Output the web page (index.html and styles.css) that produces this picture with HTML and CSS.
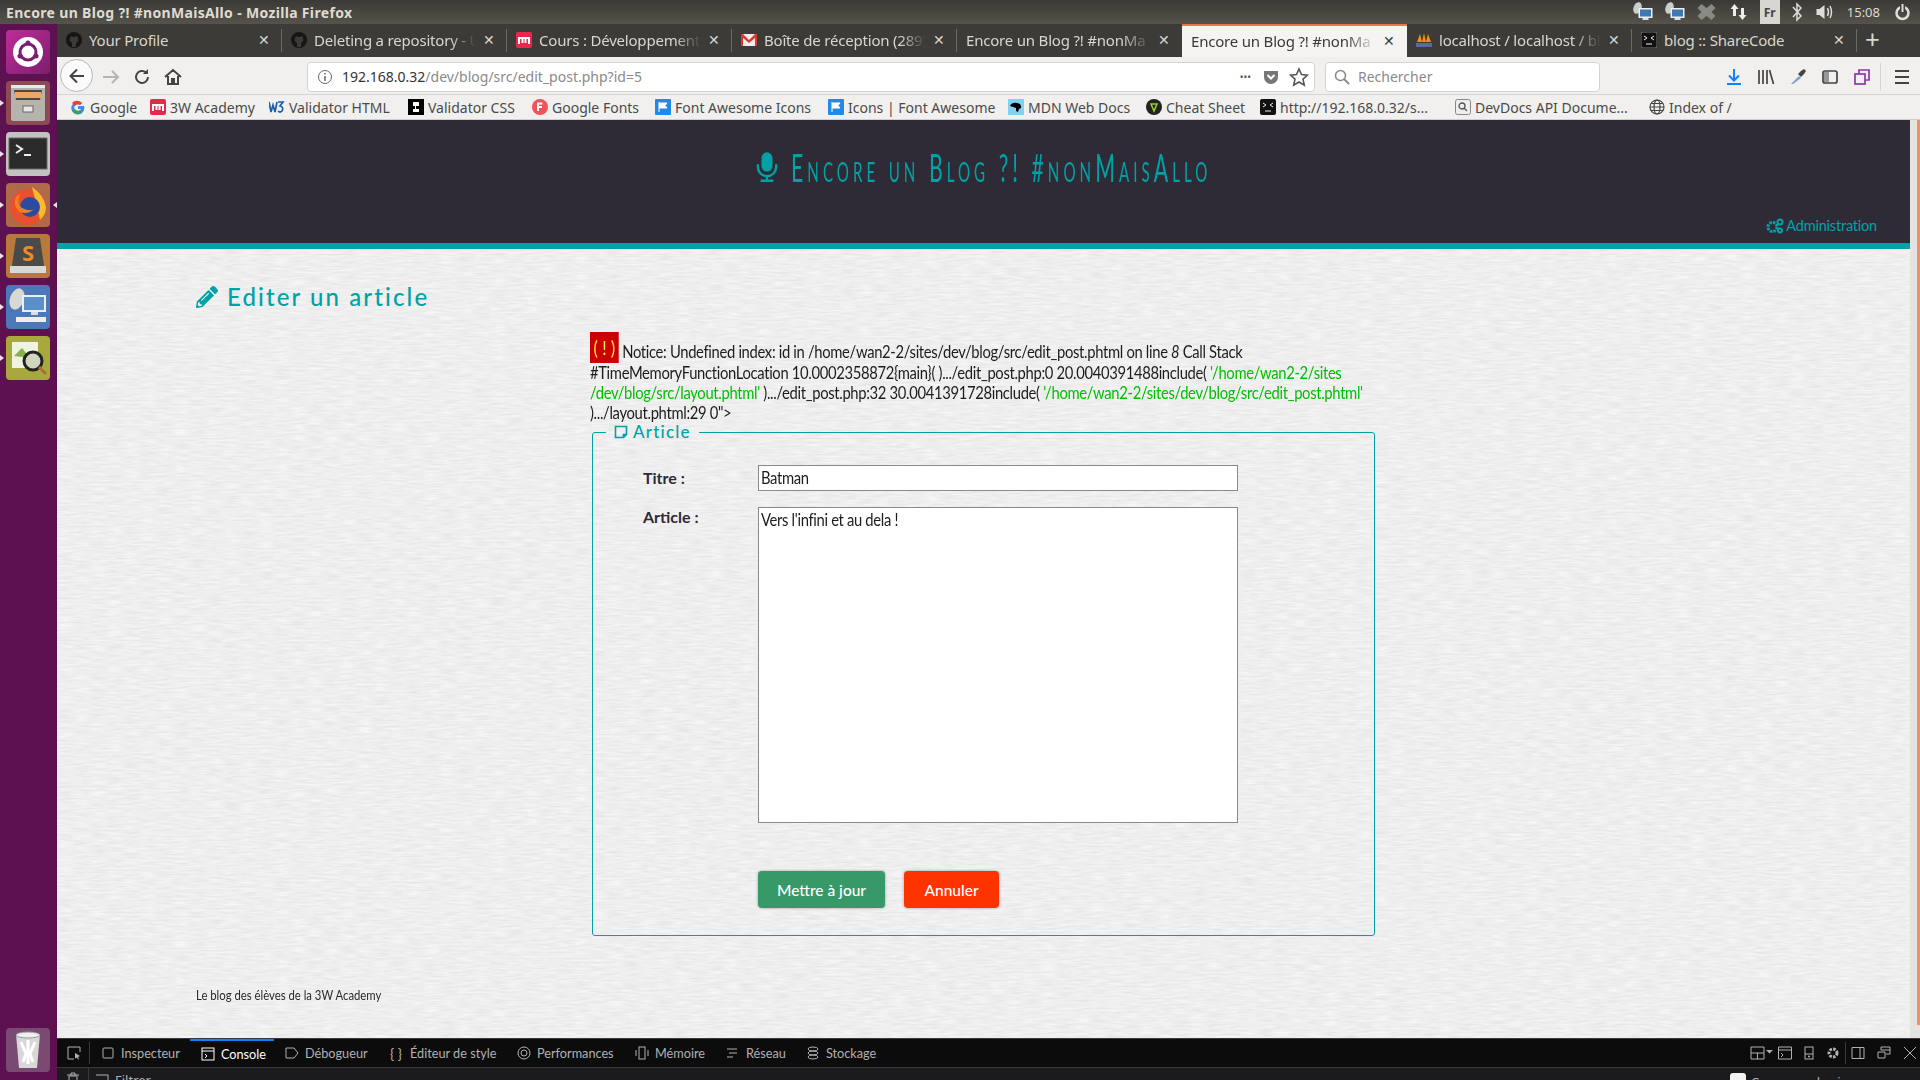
FILE: index.html
```html
<!DOCTYPE html>
<html lang="fr">
<head>
<meta charset="utf-8">
<title>Encore un Blog ?! #nonMaisAllo - Mozilla Firefox</title>
<link rel="stylesheet" href="styles.css">
</head>
<body>
<header class="topbar">
  <span class="wintitle">Encore un Blog ?! #nonMaisAllo - Mozilla Firefox</span>
  <div class="tray">
    <svg class="t-ic" viewBox="0 0 22 20"><ellipse cx="6" cy="6" rx="4" ry="6" fill="#ccc" transform="rotate(20 6 6)"/><rect x="7" y="6" width="14" height="10" fill="#eee"/><rect x="8.500" y="7.500" width="11" height="7" fill="#3d78b4"/><rect x="11" y="16" width="6" height="2" fill="#ddd"/></svg>
    <svg class="t-ic" viewBox="0 0 22 20"><ellipse cx="6" cy="6" rx="4" ry="6" fill="#ccc" transform="rotate(20 6 6)"/><rect x="7" y="6" width="14" height="10" fill="#eee"/><rect x="8.500" y="7.500" width="11" height="7" fill="#3d78b4"/><rect x="11" y="16" width="6" height="2" fill="#ddd"/></svg>
    <svg class="t-ic" viewBox="0 0 20 20"><path d="M5 2l5 4 5-4 4 4-4 4 4 4-4 4-5-4-5 4-4-4 4-4-4-4z" fill="#8a8a84"/></svg>
    <svg class="t-ic" viewBox="0 0 20 20"><path d="M6 2l4 5H7.500v7h-3V7H2zM14 18l-4-5h2.500V6h3v7H18z" fill="#eee"/></svg>
    <span class="kbd">Fr</span>
    <svg class="t-ic t-bt" viewBox="0 0 12 20"><path d="M2 5l8 9-4 4V2l4 4-8 9" fill="none" stroke="#ddd" stroke-width="1.500"/></svg>
    <svg class="t-ic" viewBox="0 0 20 20"><path d="M2 7h3l5-4v14l-5-4H2z" fill="#ddd"/><path d="M13 6q2 4 0 8M15.500 4q3 6 0 12" fill="none" stroke="#ddd" stroke-width="1.500"/></svg>
    <span class="clock">15:08</span>
    <svg class="t-ic" viewBox="0 0 20 20"><circle cx="10" cy="11" r="6" fill="none" stroke="#ddd" stroke-width="2.500"/><path d="M10 1v9" stroke="#3f3e3a" stroke-width="5"/><path d="M10 2v8" stroke="#ddd" stroke-width="2"/></svg>
  </div>
</header>

<div class="desk">
  <nav class="launcher">
    <div class="app app-dash"><svg viewBox="0 0 44 44"><circle cx="22" cy="22" r="15" fill="#fff"/><circle cx="22" cy="22" r="8" fill="none" stroke="#7b1f6d" stroke-width="3"/><circle cx="22" cy="13" r="2.500" fill="#7b1f6d"/><circle cx="14" cy="26" r="2.500" fill="#7b1f6d"/><circle cx="30" cy="26" r="2.500" fill="#7b1f6d"/></svg></div>
    <div class="app app-files pip"><svg viewBox="0 0 44 44"><rect x="5" y="4" width="34" height="36" rx="2" fill="#b5b3ae"/><rect x="5" y="4" width="34" height="3" fill="#e8e8e6"/><path d="M8 9h28l-2 10H10z" fill="#4a4744"/><rect x="9" y="11" width="26" height="6" fill="#eda56a"/><rect x="17" y="25" width="10" height="6" fill="#e8e8e6" stroke="#666"/></svg></div>
    <div class="app app-term pip"><svg viewBox="0 0 44 44"><rect x="3" y="6" width="38" height="31" fill="#2b2b2b" stroke="#666"/><path d="M10 13l6 4-6 4" fill="none" stroke="#eee" stroke-width="2"/><rect x="18" y="22" width="7" height="2" fill="#eee"/></svg></div>
    <div class="app app-fox pip pip-r"><svg viewBox="0 0 44 44"><circle cx="22" cy="24" r="18" fill="#e8502e"/><path d="M26 4q12 8 14 20 0 8-6 13-4-18-8-33z" fill="#fdb92e"/><circle cx="24" cy="24" r="10" fill="#2a4ba0"/><path d="M14 11q-4 10 2 14 8 4 12 1-6 6-14 3-8-6-4-15z" fill="#f4801f"/></svg></div>
    <div class="app app-subl pip"><svg viewBox="0 0 44 44"><path d="M10 4h24l4 28H6z" fill="#4a4a48"/><rect x="4" y="32" width="36" height="7" fill="#d8d8d4"/><text class="s-glyph" x="22" y="27">S</text></svg></div>
    <div class="app app-net pip"><svg viewBox="0 0 44 44"><ellipse cx="11" cy="14" rx="7" ry="11" fill="#d8d8d4" transform="rotate(20 11 14)"/><rect x="16" y="10" width="24" height="17" fill="#eee"/><rect x="18" y="12" width="20" height="13" fill="#5b8fc8"/><rect x="25" y="27" width="7" height="3" fill="#ddd"/><rect x="10" y="32" width="30" height="5" fill="#eee"/></svg></div>
    <div class="app app-search pip"><svg viewBox="0 0 44 44"><rect x="6" y="6" width="26" height="26" fill="#eef3e2"/><path d="M8 20l8-8 8 10z" fill="#8ab04a"/><circle cx="27" cy="25" r="9" fill="#cfd6c0" stroke="#222" stroke-width="3"/><path d="M33 31l7 7" stroke="#a8722c" stroke-width="3"/></svg></div>
    <div class="app app-trash"><svg viewBox="0 0 44 44"><path d="M10 6h24l-3 34H13z" fill="#d8d8d8"/><ellipse cx="22" cy="7" rx="12" ry="3" fill="#f0f0f0" stroke="#999"/><path d="M15 14l5 12-3 8M22 12v24M29 14l-5 12 3 8" stroke="#fff" stroke-width="3" fill="none"/></svg></div>
  </nav>

  <div class="browser">
    <div class="tabs">
      <div class="tab"><svg class="fav" viewBox="0 0 16 16"><circle cx="8" cy="8" r="8" fill="#161514"/><path d="M4 6l1-2 2 1h2l2-1 1 2q1 3-1 4l-1 1v4H6v-4L5 10q-2-1-1-4z" fill="#3b3a36"/></svg><span class="tab-t tab-full">Your Profile</span><span class="x">✕</span></div>
      <div class="tab"><svg class="fav" viewBox="0 0 16 16"><circle cx="8" cy="8" r="8" fill="#161514"/><path d="M4 6l1-2 2 1h2l2-1 1 2q1 3-1 4l-1 1v4H6v-4L5 10q-2-1-1-4z" fill="#3b3a36"/></svg><span class="tab-t">Deleting a repository - U</span><span class="x">✕</span></div>
      <div class="tab"><svg class="fav" viewBox="0 0 16 16"><rect width="16" height="16" rx="2" fill="#e8274b"/><path d="M3 12V6h10v6M6.500 7v4M9.500 7v4" fill="none" stroke="#fff" stroke-width="2"/></svg><span class="tab-t">Cours : Développement</span><span class="x">✕</span></div>
      <div class="tab"><svg class="fav" viewBox="0 0 16 16"><rect y="2" width="16" height="12" fill="#eee"/><path d="M0 2h2l6 6 6-6h2v12h-2V6L8 11 2 6v8H0z" fill="#d93a30"/></svg><span class="tab-t">Boîte de réception (289)</span><span class="x">✕</span></div>
      <div class="tab tab-plain"><span class="tab-t">Encore un Blog ?! #nonMa</span><span class="x">✕</span></div>
      <div class="tab tab-on"><span class="tab-t">Encore un Blog ?! #nonMa</span><span class="x">✕</span></div>
      <div class="tab"><svg class="fav" viewBox="0 0 16 16"><path d="M1 10L4 2l2 8M6 10L8 1l2 9M10 10l2-8 3 8z" fill="#f29111"/><rect y="11" width="16" height="4" fill="#5a6a9a"/></svg><span class="tab-t">localhost / localhost / bl</span><span class="x">✕</span></div>
      <div class="tab"><svg class="fav" viewBox="0 0 16 16"><rect width="16" height="16" rx="2" fill="#111" stroke="#777"/><path d="M3 4l3 2-3 2M13 4l-3 2 3 2M5 12h6" fill="none" stroke="#eee"/></svg><span class="tab-t tab-full">blog :: ShareCode</span><span class="x">✕</span></div>
      <span class="newtab">+</span>
    </div>

    <div class="navbar">
      <span class="back"><svg viewBox="0 0 20 20"><path d="M17 10H4M10 3.500L3.500 10l6.500 6.500" fill="none" stroke="#444" stroke-width="2"/></svg></span>
      <svg class="nb-ic" viewBox="0 0 20 20"><path d="M2 10h15M11 4l6 6-6 6" fill="none" stroke="#b5b5b5" stroke-width="2"/></svg>
      <svg class="nb-ic" viewBox="0 0 20 20"><path d="M16 10a6 6 0 1 1-2-4.500" fill="none" stroke="#444" stroke-width="2"/><path d="M16 2v5h-5z" fill="#444"/></svg>
      <svg class="nb-ic" viewBox="0 0 20 20"><path d="M2 10l8-7 8 7M5 9v8h4v-5h2v5h4V9" fill="none" stroke="#444" stroke-width="2"/></svg>
      <div class="url">
        <svg class="url-i" viewBox="0 0 16 16"><circle cx="8" cy="8" r="6.500" fill="none" stroke="#666"/><path d="M8 7v5M8 4v1.500" stroke="#666" stroke-width="1.500"/></svg>
        <span class="url-t"><b>192.168.0.32</b>/dev/blog/src/edit_post.php?id=5</span>
        <span class="dots">•••</span>
        <svg class="pocket" viewBox="0 0 16 16"><path d="M1 2h14v6a7 7 0 0 1-14 0z" fill="#777"/><path d="M4.500 6L8 9.500 11.500 6" fill="none" stroke="#fff" stroke-width="2"/></svg>
        <svg class="star" viewBox="0 0 20 20"><path d="M10 2l2.500 5.500 6 .6-4.500 4 1.300 6L10 15l-5.300 3.100 1.300-6-4.500-4 6-.6z" fill="none" stroke="#555" stroke-width="1.600"/></svg>
      </div>
      <div class="search">
        <svg class="url-i" viewBox="0 0 16 16"><circle cx="6.500" cy="6.500" r="5" fill="none" stroke="#888" stroke-width="1.500"/><path d="M10 10l5 5" stroke="#888" stroke-width="1.800"/></svg>
        <span>Rechercher</span>
      </div>
      <div class="nb-right">
        <svg class="nb-ic" viewBox="0 0 20 20"><path d="M10 2v11M5 8.500l5 5 5-5" fill="none" stroke="#0a84ff" stroke-width="2"/><rect x="3" y="16" width="14" height="2" fill="#0a84ff"/></svg>
        <svg class="nb-ic" viewBox="0 0 20 20"><path d="M3 3v14M7 3v14M11 3v14M13.500 3l4 14" fill="none" stroke="#444" stroke-width="1.700"/></svg>
        <svg class="nb-ic" viewBox="0 0 20 20"><path d="M3 17l8-8 2 2-8 6z" fill="#7a9fc8"/><path d="M10 7l3 3 3-3 2-3-2-2-3 2z" fill="#444"/></svg>
        <svg class="nb-ic" viewBox="0 0 20 20"><rect x="3" y="4" width="14" height="12" rx="2" fill="none" stroke="#444" stroke-width="1.700"/><rect x="4" y="5" width="5" height="10" fill="#999"/></svg>
        <svg class="nb-ic" viewBox="0 0 20 20"><rect x="3" y="7" width="10" height="10" fill="none" stroke="#8a3aa8" stroke-width="1.700"/><path d="M7 7V3h10v10h-4" fill="none" stroke="#8a3aa8" stroke-width="1.700"/></svg>
        <span class="nb-sep"></span>
        <svg class="nb-ic" viewBox="0 0 20 20"><path d="M3 4h14M3 10h14M3 16h14" stroke="#444" stroke-width="2"/></svg>
      </div>
    </div>

    <div class="bookmarks">
      <div class="bm"><svg class="fav" viewBox="0 0 16 16"><path d="M14 7H8v3h3a3.500 3.500 0 1 1-1-4l2-2a6.500 6.500 0 1 0 2 3z" fill="#4285f4"/><path d="M2 4a6.500 6.500 0 0 1 10 0l-2 2a3.500 3.500 0 0 0-5 1z" fill="#ea4335"/><path d="M2 12l3-2a3.500 3.500 0 0 0 5 1l2 2a6.500 6.500 0 0 1-10-1z" fill="#34a853"/></svg>Google</div>
      <div class="bm"><svg class="fav" viewBox="0 0 16 16"><rect width="16" height="16" rx="2" fill="#e8274b"/><path d="M3 12V6h10v6M6.500 7v4M9.500 7v4" fill="none" stroke="#fff" stroke-width="2"/></svg>3W Academy</div>
      <div class="bm"><svg class="fav" viewBox="0 0 16 16"><path d="M0 3l2 10 2-7 2 7 2-10M9 3h5l-3 4q4 1 2 5-2 2-4 0" fill="none" stroke="#1a5fa8" stroke-width="1.700"/></svg>Validator HTML</div>
      <div class="bm"><svg class="fav" viewBox="0 0 16 16"><rect width="16" height="16" fill="#000"/><path d="M5 3h6v4H8v3h3v3H5v-3h2V7H5z" fill="#fff"/></svg>Validator CSS</div>
      <div class="bm"><svg class="fav" viewBox="0 0 16 16"><circle cx="8" cy="8" r="8" fill="#f4505a"/><path d="M6 12V4.500h4.500M6 8h4" fill="none" stroke="#fff" stroke-width="2"/></svg>Google Fonts</div>
      <div class="bm"><svg class="fav" viewBox="0 0 16 16"><rect width="16" height="16" rx="1" fill="#228ae6"/><path d="M4 3v10M4 4h8l-2 2.500L12 9H4" fill="#fff" stroke="#fff"/></svg>Font Awesome Icons</div>
      <div class="bm"><svg class="fav" viewBox="0 0 16 16"><rect width="16" height="16" rx="1" fill="#228ae6"/><path d="M4 3v10M4 4h8l-2 2.500L12 9H4" fill="#fff" stroke="#fff"/></svg>Icons | Font Awesome</div>
      <div class="bm"><svg class="fav" viewBox="0 0 16 16"><rect width="16" height="16" fill="#83d0f2"/><path d="M2 7q2-4 7-3 5 1 4 5l-2 1-1 3-2-1V9L5 8z" fill="#000"/></svg>MDN Web Docs</div>
      <div class="bm"><svg class="fav" viewBox="0 0 16 16"><circle cx="8" cy="8" r="8" fill="#222"/><path d="M5 5h6l-3 7z" fill="none" stroke="#9ccc3a" stroke-width="1.500"/></svg>Cheat Sheet</div>
      <div class="bm"><svg class="fav" viewBox="0 0 16 16"><rect width="16" height="16" rx="2" fill="#111"/><path d="M3 4l3 2-3 2M13 4l-3 2 3 2M5 12h6" fill="none" stroke="#eee"/></svg>http://192.168.0.32/s...</div>
      <div class="bm"><svg class="fav" viewBox="0 0 16 16"><rect x=".5" y=".5" width="15" height="15" rx="2" fill="#eee" stroke="#888"/><circle cx="7" cy="7" r="3" fill="none" stroke="#555" stroke-width="1.300"/><path d="M9 9l3 3" stroke="#555" stroke-width="1.300"/></svg>DevDocs API Docume...</div>
      <div class="bm"><svg class="fav" viewBox="0 0 16 16"><g fill="none" stroke="#444" stroke-width="1.200"><circle cx="8" cy="8" r="7"/><ellipse cx="8" cy="8" rx="3" ry="7"/><path d="M1 8h14M2 4.500h12M2 11.500h12"/></g></svg>Index of /</div>
    </div>

    <div class="viewport">
      <div class="page">
        <svg class="paper" aria-hidden="true"><filter id="grain" x="0" y="0" width="100%" height="100%" color-interpolation-filters="sRGB"><feTurbulence type="fractalNoise" baseFrequency="0.06 0.5" numOctaves="2" seed="4"/><feColorMatrix type="matrix" values="0.1 0 0 0 0.885 0.1 0 0 0 0.885 0.1 0 0 0 0.885 0 0 0 0 1"/></filter><rect width="100%" height="100%" filter="url(#grain)"/></svg>
        <header class="site-head">
          <h1 class="site-title"><svg class="mic" viewBox="0 0 24 32"><rect x="6" y="0" width="12" height="21" rx="6" fill="#00a2a6"/><path d="M2 13v3a10 10 0 0 0 20 0v-3" fill="none" stroke="#00a2a6" stroke-width="2.500"/><path d="M12 26v4M5 31h14" stroke="#00a2a6" stroke-width="2.500"/></svg><span class="title-t">Encore un Blog ?! #nonMaisAllo</span></h1>
          <a class="admin"><svg class="cogs" viewBox="0 0 18 16"><circle cx="6.500" cy="9" r="4.500" fill="none" stroke="#00a2a6" stroke-width="3" stroke-dasharray="2.500 1"/><circle cx="14" cy="4" r="2.500" fill="none" stroke="#00a2a6" stroke-width="2"/><circle cx="14" cy="12.500" r="2" fill="none" stroke="#00a2a6" stroke-width="2"/></svg>Administration</a>
        </header>
        <main class="content">
          <h2 class="heading"><svg class="pencil" viewBox="0 0 512 512"><path fill="#00a2a6" d="M497.900 142.100l-46.100 46.100c-4.700 4.700-12.300 4.700-17 0l-111-111c-4.700-4.700-4.700-12.300 0-17l46.100-46.100c18.700-18.700 49.100-18.700 67.900 0l60.100 60.100c18.800 18.700 18.800 49.100 0 67.900zM284.200 99.800L21.600 362.400.4 483.900c-2.900 16.400 11.400 30.600 27.800 27.800l121.500-21.300 262.600-262.600c4.700-4.700 4.700-12.300 0-17l-111-111c-4.800-4.700-12.400-4.700-17.100 0zM124.100 339.900c-5.500-5.500-5.500-14.300 0-19.800l154-154c5.500-5.500 14.300-5.500 19.800 0s5.500 14.300 0 19.800l-154 154c-5.500 5.500-14.300 5.500-19.800 0zM88 424h48v36.300l-64.500 11.300-31.100-31.100L51.700 376H88v48z"/></svg>Editer un article</h2>
          <div class="col">
            <p class="notice"><span class="bang">( ! )</span> Notice: Undefined index: id in /home/wan2-2/sites/dev/blog/src/edit_post.phtml on line <i>8</i> Call Stack<br>#TimeMemoryFunctionLocation 10.0002358872{main}( ).../edit_post.php:0 20.0040391488include( <span class="str">'/home/wan2-2/sites<br>/dev/blog/src/layout.phtml'</span> ).../edit_post.php:32 30.0041391728include( <span class="str">'/home/wan2-2/sites/dev/blog/src/edit_post.phtml'</span><br>).../layout.phtml:29 0"&gt;</p>
            <fieldset class="box">
              <legend class="legend"><svg class="note" viewBox="0 0 14 14"><path d="M1.500 1.500h11v8l-3 3h-8zM12.500 9.500h-3v3" fill="none" stroke="#00a2a6" stroke-width="1.600"/></svg>Article</legend>
              <div class="row row-title"><label class="lab">Titre :</label><div class="field field-one"><span class="fit">Batman</span></div></div>
              <div class="row row-body"><label class="lab">Article :</label><div class="field field-area"><span class="fit">Vers l'infini et au dela !</span></div></div>
              <div class="actions"><button class="btn btn-ok">Mettre à jour</button><button class="btn btn-no">Annuler</button></div>
            </fieldset>
          </div>
          <footer class="foot">Le blog des élèves de la 3W Academy</footer>
        </main>
      </div>
      <div class="scroll"><span class="thumb"></span></div>
    </div>

    <div class="devtools">
      <div class="dt-tabs">
        <svg class="dt-pick" viewBox="0 0 14 14"><path d="M13 6V1H1v12h6" fill="none" stroke="#b1b1b3"/><path d="M8 7l5 3-2 1 1 2-1 .5-1-2-2 1z" fill="#b1b1b3"/></svg>
        <span class="dt-sep"></span>
        <div class="dt"><svg class="dt-i" viewBox="0 0 14 14"><rect x="2" y="2" width="10" height="10" rx="1" fill="none" stroke="#b1b1b3"/></svg>Inspecteur</div>
        <div class="dt dt-on"><svg class="dt-i" viewBox="0 0 14 14"><rect x="1" y="1" width="12" height="12" fill="none" stroke="#fff"/><path d="M1 4h12M4 7l2 2-2 2" fill="none" stroke="#fff"/></svg>Console</div>
        <div class="dt dt-after"><svg class="dt-i" viewBox="0 0 14 14"><path d="M1 2h8l4 5-4 5H1z" fill="none" stroke="#b1b1b3"/></svg>Débogueur</div>
        <div class="dt"><span class="brace">{ }</span>Éditeur de style</div>
        <div class="dt"><svg class="dt-i" viewBox="0 0 14 14"><circle cx="7" cy="7" r="6" fill="none" stroke="#b1b1b3"/><circle cx="7" cy="7" r="3" fill="none" stroke="#b1b1b3"/></svg>Performances</div>
        <div class="dt"><svg class="dt-i" viewBox="0 0 14 14"><rect x="4" y="1" width="6" height="12" fill="none" stroke="#b1b1b3"/><path d="M1 4v6M13 4v6" stroke="#b1b1b3"/></svg>Mémoire</div>
        <div class="dt"><svg class="dt-i" viewBox="0 0 14 14"><path d="M1 3h10M3 7h8M1 11h6" stroke="#b1b1b3"/></svg>Réseau</div>
        <div class="dt"><svg class="dt-i" viewBox="0 0 14 14"><g fill="none" stroke="#b1b1b3"><ellipse cx="7" cy="3" rx="5" ry="2"/><ellipse cx="7" cy="7" rx="5" ry="2"/><ellipse cx="7" cy="11" rx="5" ry="2"/></g></svg>Stockage</div>
        <div class="dt-right">
          <svg class="dr dr-a" viewBox="0 0 24 14"><path d="M1 1h13v12H1zM1 7h13M7.500 7v6" fill="none" stroke="#b1b1b3"/><path d="M16 4h7l-3.500 3.500z" fill="#b1b1b3"/></svg>
          <svg class="dr" viewBox="0 0 14 14"><path d="M.5 1h13v12H.5zM.5 4h13M3 7l2 2-2 2" fill="none" stroke="#b1b1b3"/></svg>
          <svg class="dr dr-n" viewBox="0 0 10 14"><rect x="1" y="1" width="8" height="12" fill="none" stroke="#b1b1b3"/><path d="M1 8h8" stroke="#b1b1b3"/><circle cx="5" cy="10.500" r="1" fill="#b1b1b3"/></svg>
          <svg class="dr" viewBox="0 0 14 14"><circle cx="7" cy="7" r="4" fill="none" stroke="#b1b1b3" stroke-width="3" stroke-dasharray="2.500 1.200"/></svg>
          <span class="dt-sep dr-sep"></span>
          <svg class="dr" viewBox="0 0 14 14"><path d="M1 1.500h12v11H1zM9 1.500v11" fill="none" stroke="#b1b1b3"/></svg>
          <svg class="dr" viewBox="0 0 14 14"><path d="M4 4V1h9v7h-4M1 6h7v6H1zM4 4h9" fill="none" stroke="#b1b1b3"/></svg>
          <svg class="dr" viewBox="0 0 14 14"><path d="M1 1l12 12M13 1L1 13" stroke="#b1b1b3"/></svg>
        </div>
      </div>
      <div class="dt-bar">
        <svg class="dt-trash" viewBox="0 0 14 14"><path d="M3 4h8v10H3zM1 3h12M5 3V1h4v2" fill="none" stroke="#b1b1b3"/></svg>
        <span class="dt-sep"></span>
        <svg class="dt-filter" viewBox="0 0 14 14"><path d="M1 2h12v12" fill="none" stroke="#b1b1b3"/></svg>
        <span class="filt">Filtrer</span>
        <span class="check"></span><span class="persist">Conserver les journaux</span>
      </div>
    </div>
  </div>
</div>
</body>
</html>
```

FILE: styles.css
```css
* { box-sizing: border-box; }
html, body { margin: 0; height: 100%; overflow: hidden; }
body { display: flex; flex-direction: column; width: 1920px; height: 1080px; font-family: "Noto Sans", sans-serif; }
svg { display: block; flex: none; }

/* Ubuntu top panel */
.topbar { height: 24px; flex: none; display: flex; align-items: center; justify-content: space-between; padding: 0 6px; background: linear-gradient(#3a3935, #55534b); color: #dfdbd2; }
.wintitle { font: bold 14px "Noto Sans", sans-serif; letter-spacing: .33px; }
.tray { display: flex; align-items: center; gap: 9px; }
.t-ic { width: 23px; height: 20px; }
.t-bt { width: 12px; margin: 0 1px; }
.kbd { width: 20px; height: 24px; background: #d8d6d0; color: #444; font: bold 12px "Noto Sans", sans-serif; display: flex; align-items: center; justify-content: center; margin: 0 1px; }
.clock { font-size: 13px; margin: 0 2px; color: #dfdbd2; }

.desk { flex: 1; display: flex; min-height: 0; }

/* Launcher */
.launcher { width: 57px; flex: none; background: #5e1150; display: flex; flex-direction: column; gap: 7px; padding: 6px 6px 8px; }
.app { width: 44px; height: 44px; border-radius: 4px; position: relative; }
.app svg { width: 44px; height: 44px; }
.pip::before { content: ""; position: absolute; left: -6px; top: 19px; border: 3px solid transparent; border-left: 4px solid #e8e3e6; }
.pip-r::after { content: ""; position: absolute; right: -7px; top: 19px; border: 3px solid transparent; border-right: 4px solid #e8e3e6; }
.app-dash { background: linear-gradient(135deg, #c02c98, #7b1f6d); }
.app-files { background: #8c4a55; }
.app-term { background: #c4c2be; }
.app-fox { background: #b06a4a; }
.app-subl { background: #b87a3a; }
.app-net { background: #4a78b8; }
.app-search { background: #a8a83e; }
.app-trash { margin-top: auto; background: #7b4a72; }
.s-glyph { font: bold 22px "Noto Sans", sans-serif; fill: #f08a24; text-anchor: middle; }

.browser { flex: 1; min-width: 0; display: flex; flex-direction: column; }

/* Tabs */
.tabs { height: 33px; flex: none; background: #3c3b37; display: grid; grid-template-columns: repeat(8, 225px) 1fr; color: #d8d6cf; font-size: 15px; letter-spacing: -.2px; }
.tab { display: flex; align-items: center; gap: 7px; padding: 0 12px 2px 9px; position: relative; min-width: 0; }
.tab::after { content: ""; position: absolute; right: 0; top: 5px; bottom: 5px; width: 1px; background: #6b6a64; }
.tab-plain::after, .tab-on::after { display: none; }
.tab-on { background: #f5f4f2; color: #3b3a36; border-top: 2px solid #f0734a; }
.tab-t { flex: 1; min-width: 0; white-space: nowrap; -webkit-mask-image: linear-gradient(90deg, #000 84%, transparent); mask-image: linear-gradient(90deg, #000 84%, transparent); }
.tab-full { -webkit-mask-image: none; mask-image: none; }
.x { font-size: 14px; flex: none; }
.newtab { font-size: 26px; line-height: 30px; padding-left: 8px; color: #d8d6cf; }
.fav { width: 16px; height: 16px; }

/* Nav bar */
.navbar { height: 38px; flex: none; background: #f1f0ee; display: flex; align-items: center; padding: 2px 0 0 3px; gap: 11px; border-bottom: 1px solid #d5d4d2; }
.back { width: 33px; height: 33px; flex: none; margin: -2px -3px 0 0; border: 1px solid #b8b7b5; border-radius: 50%; background: #fbfbfb; display: flex; align-items: center; justify-content: center; }
.back svg { width: 20px; height: 20px; }
.nb-ic { width: 20px; height: 20px; }
.url { width: 1008px; height: 30px; margin-left: 113px; background: #fff; border: 1px solid #d4d3d1; border-radius: 4px; display: flex; align-items: center; padding: 0 5px 0 9px; font-size: 14px; color: #8a8a8a; }
.url-i { width: 16px; height: 16px; flex: none; }
.url-t { flex: 1; margin-left: 9px; }
.url-t b { color: #333; font-weight: 400; }
.dots { font-size: 10px; color: #555; margin-right: 12px; }
.pocket { width: 16px; height: 16px; margin-right: 10px; }
.star { width: 20px; height: 20px; }
.search { width: 275px; height: 30px; margin-left: -1px; background: #fff; border: 1px solid #d4d3d1; border-radius: 4px; display: flex; align-items: center; gap: 8px; padding-left: 8px; font-size: 14px; color: #8a8a8a; }
.nb-right { display: flex; align-items: center; gap: 12px; margin-left: 113px; }
.nb-sep { width: 1px; height: 28px; background: #d5d4d2; margin: 0 -1px 0 -4px; }

/* Bookmarks */
.bookmarks { height: 25px; flex: none; background: #f1f0ee; display: grid; grid-template-columns: 80px 119px 139px 124px 123px 173px 180px 138px 114px 195px 194px 1fr; padding-left: 13px; align-items: center; font-size: 14px; color: #4a4a4a; border-bottom: 1px solid #cfcecc; }
.bm { display: flex; align-items: center; gap: 4px; white-space: nowrap; }

/* Web page */
.viewport { flex: 1; min-height: 0; display: flex; }
.page { flex: 1; min-width: 0; position: relative; display: flex; flex-direction: column; background: #ededed; overflow: hidden; font-family: "Lato", sans-serif; }
.paper { position: absolute; inset: 0; width: 100%; height: 100%; }
.scroll { width: 10px; flex: none; background: #e3e3e1; display: flex; justify-content: flex-end; padding-bottom: 13px; }
.thumb { width: 3px; background: #ee9068; }

.site-head { position: relative; flex: none; height: 129px; background: #2f2b36; border-bottom: 6px solid #00a2a6; display: flex; flex-direction: column; align-items: center; }
.site-title { margin: 24px 0 0 0; display: flex; align-items: center; gap: 13px; font: 400 38px "Lato", sans-serif; font-variant: small-caps; color: #00a2a6; white-space: nowrap; }
.mic { width: 22px; height: 30px; }
.title-t { display: block; width: 420px; letter-spacing: 7.200px; transform: scaleX(.56); transform-origin: left center; }
.admin { align-self: flex-end; margin: 27px 33px 0 0; display: flex; align-items: center; gap: 2px; color: #00a2a6; font-size: 14.500px; letter-spacing: -.2px; }
.cogs { width: 18px; height: 16px; }

.content { position: relative; flex: 1; display: flex; flex-direction: column; padding: 33px 0 0 139px; }
.heading { margin: 0; display: flex; align-items: center; gap: 9px; font: 500 24px "Lato", sans-serif; letter-spacing: 2.100px; color: #00a2a6; line-height: 30px; }
.pencil { width: 22px; height: 22px; }

.col { margin-left: 394px; width: 790px; margin-top: 20px; }
.notice { margin: 0; width: 900px; font: 17px/20px "Lato", sans-serif; letter-spacing: -.38px; color: #1c1c1c; white-space: nowrap; transform: scaleX(.87); transform-origin: left top; }
.bang { display: inline-block; width: 33px; height: 31px; line-height: 31px; background: #cc0000; color: #fce94f; text-align: center; font-size: 19px; letter-spacing: 0; white-space: nowrap; vertical-align: 3px; }
.str { color: #00c000; }

.box { margin: -1px 0 0 2px; padding: 0; width: 783px; height: 514px; border: 1px solid #00a2a6; border-radius: 3px; position: relative; display: block; }
.legend { margin-left: 13px; padding: 0 8px; display: flex; align-items: center; gap: 5px; font: 500 17px "Lato", sans-serif; letter-spacing: 1.200px; color: #00a2a6; line-height: 20px; }
.note { width: 14px; height: 14px; }
.row { display: flex; }
.row-title { margin-top: 23px; align-items: center; }
.row-body { margin-top: 16px; }
.lab { width: 115px; margin-left: 50px; font: 700 16px/20px "Lato", sans-serif; color: #2f2b36; }
.field { width: 480px; background: #fff; border: 1px solid #8a8a8a; padding: 0 2px; color: #1c1c1c; }
.fit { display: inline-block; font: 17px/20px "Lato", sans-serif; letter-spacing: -.38px; white-space: nowrap; transform: scaleX(.87); transform-origin: left center; }
.field-one { height: 26px; display: flex; align-items: center; }
.field-area { height: 316px; padding-top: 2px; }
.actions { display: flex; gap: 19px; margin: 48px 0 0 165px; }
.btn { height: 37px; border: 0; border-radius: 4px; color: #fff; font: 500 15.500px "Lato", sans-serif; box-shadow: 0 0 3px rgba(0,0,0,.35); padding: 0; }
.btn-ok { width: 127px; background: #379868; }
.btn-no { width: 95px; background: #ff3300; }

.foot { margin-top: 51px; font: 13px "Lato", sans-serif; color: #2a2a2a; white-space: nowrap; transform: scaleX(.87); transform-origin: left center; }

/* Devtools */
.devtools { height: 42px; flex: none; background: #1b1b1d; border-top: 1px solid #38383d; color: #b1b1b3; font-size: 12px; overflow: hidden; }
.dt-tabs { height: 29px; background: #0c0c0d; border-bottom: 1px solid #38383d; display: grid; grid-template-columns: 32px 12px 89px 84px 116px 127px 118px 91px 80px 80px 1fr; align-items: center; font-family: "Lato", sans-serif; font-size: 12.700px; }
.dt-pick { width: 14px; height: 14px; margin-left: 10px; }
.dt-sep { width: 1px; height: 22px; background: #38383d; display: block; }
.dt { display: flex; align-items: center; gap: 6px; height: 100%; white-space: nowrap; }
.dt-i { width: 14px; height: 14px; }
.dt-on { color: #fff; border-top: 2px solid #0a84ff; padding-left: 11px; }
.dt-after { padding-left: 11px; }
.brace { width: 14px; font-size: 14px; }
.dt-right { display: flex; align-items: center; justify-content: flex-end; gap: 12px; padding-right: 3px; }
.dr { width: 14px; height: 14px; }
.dr-a { width: 24px; margin-right: -8px; }
.dr-n { width: 10px; }
.dr-sep { margin: 0 -7px; }
.dt-bar { height: 13px; display: flex; align-items: flex-start; padding-left: 9px; }
.dt-trash { width: 14px; height: 14px; margin: 4px 8px 0 0; }
.dt-bar .dt-sep { height: 13px; }
.dt-filter { width: 14px; height: 14px; margin: 5px 6px 0 6px; }
.filt { margin-top: 3px; font-size: 13px; flex: 1; }
.check { width: 16px; height: 16px; background: #f4f4f4; border-radius: 3px; margin: 5px 5px 0 0; }
.persist { margin: 5px 28px 0 0; font-size: 13px; }
```
